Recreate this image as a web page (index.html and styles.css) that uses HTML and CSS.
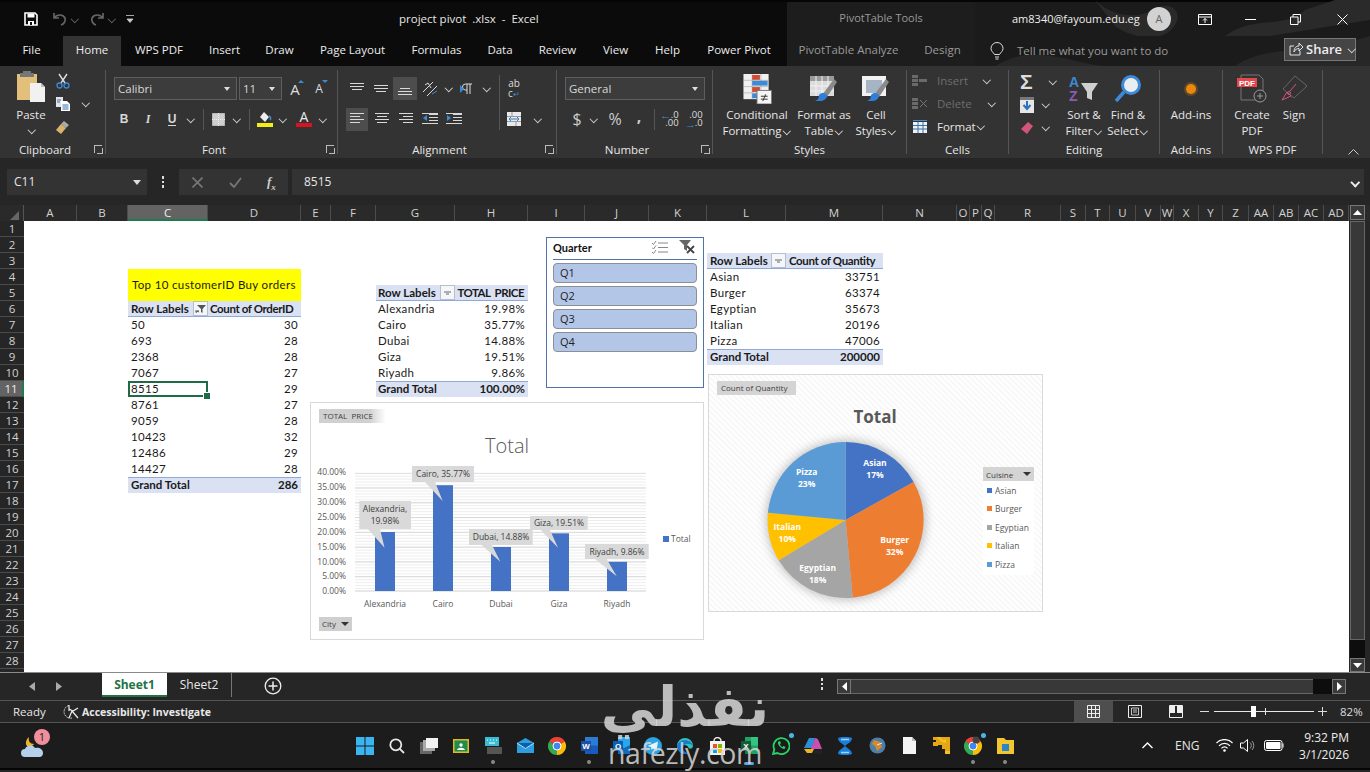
FILE: index.html
```html
<!DOCTYPE html>
<html lang="en">
<head>
<meta charset="utf-8">
<title>project pivot .xlsx - Excel</title>
<link rel="stylesheet" href="styles.css">
</head>
<body>
<svg class="defs" width="0" height="0" aria-hidden="true">
  <symbol id="a-top" viewBox="0 0 16 14"><path d="M1 1.5h14M1 4.5h14M3 7.5h10" stroke="#d8d8d8" fill="none"/></symbol>
  <symbol id="a-mid" viewBox="0 0 16 14"><path d="M1 3.5h14M1 6.5h14M3 9.5h10" stroke="#d8d8d8" fill="none"/></symbol>
  <symbol id="a-bot" viewBox="0 0 16 14"><path d="M3 6.5h10M1 9.5h14M1 12.5h14" stroke="#d8d8d8" fill="none"/></symbol>
  <symbol id="a-l" viewBox="0 0 16 14"><path d="M1 1.5h14M1 4.5h10M1 7.5h14M1 10.5h10" stroke="#d8d8d8" fill="none"/></symbol>
  <symbol id="a-c" viewBox="0 0 16 14"><path d="M1 1.5h14M3 4.5h10M1 7.5h14M3 10.5h10" stroke="#d8d8d8" fill="none"/></symbol>
  <symbol id="a-r" viewBox="0 0 16 14"><path d="M1 1.5h14M5 4.5h10M1 7.5h14M5 10.5h10" stroke="#d8d8d8" fill="none"/></symbol>
  <symbol id="brush" viewBox="0 0 30 30"><path d="M13 21L25 5l3 3-10 15z" fill="#8a8a8a"/><path d="M10 21c3-3 6-2 8 0 0 4-3 6-8 6H6c3-1 4-3 4-6z" fill="#2f7ed8"/></symbol>
</svg>

<header class="title">
  <div class="qat">
    <svg class="q-save" width="14" height="14" viewBox="0 0 14 14"><path d="M1 1h10l2 2v10H1z" fill="none" stroke="#fff" stroke-width="1.6"/><path d="M3.500 1.500h7v4h-7zM4 9h6v4H4z" fill="#fff"/><path d="M6 10h2v3H6z" fill="#111"/></svg>
    <svg class="q-undo" width="16" height="14" viewBox="0 0 16 14"><path d="M2 6c3-4 9-4 11 0 1 3-1 6-4 7M2 1v5h5" fill="none" stroke="#666" stroke-width="1.7"/></svg>
    <i class="c dim"></i>
    <svg class="q-redo" width="16" height="14" viewBox="0 0 16 14"><path d="M14 6c-3-4-9-4-11 0-1 3 1 6 4 7M14 1v5H9" fill="none" stroke="#666" stroke-width="1.7"/></svg>
    <i class="c dim"></i>
    <svg class="q-more" width="8" height="10" viewBox="0 0 8 10"><path d="M0 1.500h8M1 5h6L4 8.500z" fill="#ccc" stroke="#ccc" stroke-width=".8"/></svg>
  </div>
  <div class="doc">project pivot&nbsp; .xlsx&nbsp; -&nbsp; Excel</div>
  <div class="ctx">PivotTable Tools</div>
  <div class="acct">
    <svg class="swirl" width="395" height="36" viewBox="0 0 395 36"><path d="M120 0c14 14 40 22 62 8 14-8 30 6 14 22-12 12-40 8-56-4zM250 36c30-22 60-6 80-26l30-10h35v20c-40 6-60 10-100 16z" fill="#2a2a2a"/></svg>
    <span class="mail">am8340@fayoum.edu.eg</span>
    <span class="avatar">A</span>
    <svg class="w-disp" width="14" height="11" viewBox="0 0 14 11"><path d="M.5.500h13v10H.5zM.5 3h13M7 9V4.500M5 6.500l2-2 2 2" fill="none" stroke="#fff"/></svg>
    <svg class="w-min" width="11" height="11" viewBox="0 0 11 11"><path d="M0 5.500h11" stroke="#fff"/></svg>
    <svg class="w-max" width="11" height="11" viewBox="0 0 11 11"><path d="M.5 3h7.500v7.500H.5zM3 3V.5h7.500V8H8" fill="none" stroke="#fff"/></svg>
    <svg class="w-close" width="11" height="11" viewBox="0 0 11 11"><path d="M.5.500l10 10M10.500.5l-10 10" stroke="#fff"/></svg>
  </div>
</header>

<nav class="tabs">
  <span class="tab">File</span>
  <span class="tab on">Home</span>
  <span class="tab">WPS PDF</span>
  <span class="tab">Insert</span>
  <span class="tab">Draw</span>
  <span class="tab">Page Layout</span>
  <span class="tab">Formulas</span>
  <span class="tab">Data</span>
  <span class="tab">Review</span>
  <span class="tab">View</span>
  <span class="tab">Help</span>
  <span class="tab">Power Pivot</span>
  <div class="ctx-tabs"><span class="tab mute an">PivotTable Analyze</span><span class="tab mute de">Design</span></div>
  <div class="tell">
    <svg class="swirl2" width="395" height="30" viewBox="0 0 395 30"><path d="M20 30C60 6 90 26 130 30zM260 30c30-22 70-10 135-30v30z" fill="#272727"/></svg>
    <svg class="bulb" width="14" height="18" viewBox="0 0 14 18"><path d="M4.500 12.500C3 10 1 9 1 6.500a6 6 0 0 1 12 0c0 2.500-2 3.500-3.500 6zM5 15h4M5.500 17h3" fill="none" stroke="#ddd"/></svg>
    <span class="tell-t">Tell me what you want to do</span>
    <span class="share">
      <svg width="14" height="14" viewBox="0 0 14 14"><path d="M5 4H1v9h10V9M5 10c0-4 2-6 5-6V1l4 4-4 4V6.500c-2 0-4 1-5 3.500z" fill="none" stroke="#e5e5e5"/></svg>
      <b>Share</b><i class="c"></i>
    </span>
  </div>
</nav>

<section class="ribbon">
  <div class="grp g-clip">
    <div class="body clipb">
      <div class="big paste">
        <svg width="30" height="34" viewBox="0 0 30 34"><path d="M1 4h20v26H1z" fill="#e3bf7c"/><path d="M7 1h8v2h3v4H4V3h3z" fill="#777"/><path d="M14 13h11l4 4v15H14z" fill="#f1f1f1"/><path d="M25 13v4h4" fill="#bbb"/></svg>
        <span>Paste</span><i class="c solo"></i>
      </div>
      <div class="stack3">
        <svg width="16" height="16" viewBox="0 0 16 16"><path d="M4 1l6 9M12 1L6 10" stroke="#ddd" stroke-width="1.400"/><circle cx="4.500" cy="12.500" r="2.500" fill="none" stroke="#3e8ad6" stroke-width="1.300"/><circle cx="11.500" cy="12.500" r="2.500" fill="none" stroke="#3e8ad6" stroke-width="1.300"/></svg>
        <svg width="16" height="16" viewBox="0 0 16 16"><path d="M1 1h7v10H1z" fill="#e5e5e5"/><path d="M6 5h6l3 3v7H6z" fill="#fff"/><path d="M7.500 9h6M7.500 11h6M7.500 13h6M2 4h4M2 6h3" stroke="#3670b5"/></svg>
        <svg width="16" height="16" viewBox="0 0 16 16"><path d="M9 2l5 4-3 3-5-4z" fill="#aaa"/><path d="M6 5l5 4-5 6-5-4z" fill="#d9b26c"/></svg>
      </div>
      <i class="c clip-c"></i>
    </div>
    <footer class="lab has-dl">Clipboard<i class="dl"></i></footer>
  </div>

  <div class="grp g-font">
    <div class="body rows">
      <div class="row">
        <span class="combo c-font">Calibri<i class="tri"></i></span>
        <span class="combo c-size">11<i class="tri"></i></span>
        <span class="b grow">A<em class="up"></em></span>
        <span class="b shrink">A<em class="dn"></em></span>
      </div>
      <div class="row r2">
        <span class="b fmt"><b>B</b></span>
        <span class="b fmt"><b class="it">I</b></span>
        <span class="b fmt"><b class="un">U</b></span>
        <i class="c w12"></i>
        <i class="vs ml7"></i>
        <span class="b ml2"><svg width="13" height="13" viewBox="0 0 13 13"><path d="M.5.500h12v12H.5z" fill="#cfcfcf" stroke="#eee" stroke-dasharray="1 1"/><path d="M0 6.500h13M6.500 0v13" stroke="#eee" stroke-dasharray="1 1"/></svg></span>
        <i class="c w12"></i>
        <i class="vs ml7"></i>
        <span class="b bfill"><svg width="16" height="16" viewBox="0 0 16 16"><path d="M7 1l5 5-4 5-5-5z" fill="#eee"/><path d="M12 5c2 1 2 3 1 4" fill="none" stroke="#3e8ad6" stroke-width="1.500"/><path d="M0 12h16v4H0z" fill="#f5ee12"/></svg></span>
        <i class="c w12"></i>
        <span class="b bcol"><svg width="16" height="16" viewBox="0 0 16 16"><path d="M0 12h16v4H0z" fill="#d9121f"/></svg><span class="acol">A</span></span>
        <i class="c w12"></i>
      </div>
    </div>
    <footer class="lab has-dl">Font<i class="dl"></i></footer>
  </div>

  <div class="grp g-align">
    <div class="body alignb">
      <div class="rows a-left">
        <div class="row">
          <span class="b"><svg width="16" height="14"><use href="#a-top"/></svg></span>
          <span class="b"><svg width="16" height="14"><use href="#a-mid"/></svg></span>
          <span class="b hl"><svg width="16" height="14"><use href="#a-bot"/></svg></span>
          <span class="b ori"><svg width="17" height="16" viewBox="0 0 17 16"><path d="M1 11L11 1M5 15L15 5" stroke="#ddd" fill="none"/><path d="M3 4l3-2 3 5" stroke="#ddd" fill="none"/><path d="M10 13l5-3" stroke="#3e8ad6"/></svg></span>
          <i class="c w12"></i>
          <span class="b rtl"><svg width="16" height="12" viewBox="0 0 16 12"><path d="M7 1v10M10 1v10M7 1H5.500a3 3 0 0 0 0 6H7M7 1h5" stroke="#ddd" fill="none"/><path d="M0 2l4 4-4 4z" fill="#3e8ad6"/></svg></span>
          <i class="c w12"></i>
        </div>
        <div class="row r2 sm">
          <span class="b hl"><svg width="16" height="14"><use href="#a-l"/></svg></span>
          <span class="b"><svg width="16" height="14"><use href="#a-c"/></svg></span>
          <span class="b"><svg width="16" height="14"><use href="#a-r"/></svg></span>
          <span class="b"><svg width="16" height="14" viewBox="0 0 16 14"><path d="M7 2.500h9M7 5.500h9M7 8.500h9M0 11.500h16M0 1.500h16" stroke="#d8d8d8" fill="none"/><path d="M5 3L1 6l4 3z" fill="#3e8ad6"/></svg></span>
          <span class="b"><svg width="16" height="14" viewBox="0 0 16 14"><path d="M7 2.500h9M7 5.500h9M7 8.500h9M0 11.500h16M0 1.500h16" stroke="#d8d8d8" fill="none"/><path d="M1 3l4 3-4 3z" fill="#3e8ad6"/></svg></span>
        </div>
      </div>
      <i class="vs tall"></i>
      <div class="rows a-right">
        <div class="row">
          <span class="b wrapt"><b>ab</b><b>c<em>↵</em></b></span>
        </div>
        <div class="row r2">
          <span class="b"><svg width="16" height="16" viewBox="0 0 16 16"><path d="M1 1h14v14H1z" fill="#e9e9e9"/><path d="M1 5.500h14M1 10.500h14M6 1v4M10 11v4" stroke="#999"/><path d="M3 8h10M3 8l2-2M3 8l2 2M13 8l-2-2M13 8l-2 2" stroke="#2f7ed8" fill="none"/></svg></span>
          <i class="c w12 ml5"></i>
        </div>
      </div>
    </div>
    <footer class="lab has-dl">Alignment<i class="dl"></i></footer>
  </div>

  <div class="grp g-num">
    <div class="body rows">
      <div class="row"><span class="combo c-num">General<i class="tri"></i></span></div>
      <div class="row r2">
        <span class="b tx-l">$</span>
        <i class="c w12 nm2"></i>
        <span class="b tx-l ml4">%</span>
        <span class="b tx-l comma">,</span>
        <i class="vs ml3"></i>
        <span class="b ml3 dec"><em class="ar">←</em><span>.0<br>.00</span></span>
        <span class="b dec"><em class="ar a2">→</em><span>.00<br>.0</span></span>
      </div>
    </div>
    <footer class="lab has-dl">Number<i class="dl"></i></footer>
  </div>

  <div class="grp g-sty">
    <div class="body bigs">
      <div class="big w72">
        <svg width="30" height="31" viewBox="0 0 30 31"><path d="M1 0h26v26H1z" fill="#f1f1f1"/><path d="M1 6.500h26M1 13h26M1 19.500h26M10 0v26M19 0v26" stroke="#aaa" stroke-width=".7"/><path d="M10 1h8v5h-8z" fill="#cf4b32"/><path d="M10 7h16v5H10z" fill="#3e8ad6"/><path d="M10 13.500h8v5h-8z" fill="#cf4b32"/><path d="M10 20h6v5h-6z" fill="#3e8ad6"/><path d="M15 17h15v14H15z" fill="#f4f4f4" stroke="#777"/><path d="M19 23h7M19 26h7M24 21l-3 7" stroke="#333"/></svg>
        <span>Conditional</span><span>Formatting<i class="c inl"></i></span>
      </div>
      <div class="big w62">
        <svg width="30" height="30" viewBox="0 0 30 30"><path d="M1 2h24v20H1z" fill="#dcdcdc"/><path d="M1 2h24v5H1z" fill="#9a9a9a"/><path d="M1 12h24M1 17h24M7 2v20M13 2v20M19 2v20" stroke="#f2f2f2"/><use href="#brush" width="30" height="30"/></svg>
        <span>Format as</span><span>Table<i class="c inl"></i></span>
      </div>
      <div class="big w42">
        <svg width="30" height="30" viewBox="0 0 30 30"><path d="M1 2h24v20H1z" fill="#f2f2f2"/><path d="M5 6h16v13H5z" fill="#a7b4c6"/><use href="#brush" width="30" height="30"/></svg>
        <span>Cell</span><span>Styles<i class="c inl"></i></span>
      </div>
    </div>
    <footer class="lab">Styles</footer>
  </div>

  <div class="grp g-cells">
    <div class="body cellrows">
      <div class="crow dis"><svg width="18" height="14" viewBox="0 0 18 14"><path d="M1 1h6v3H1zM1 5h6v3H1zM1 9h6v3H1zM8 5h8v3H8z" fill="#6a6a6a"/></svg><span>Insert</span><i class="c c-a"></i></div>
      <div class="crow dis"><svg width="18" height="14" viewBox="0 0 18 14"><path d="M1 1h6v3H1zM1 5h6v3H1zM1 9h6v3H1z" fill="#6a6a6a"/><path d="M9 3l7 7M16 3l-7 7" stroke="#777"/></svg><span>Delete</span><i class="c c-b"></i></div>
      <div class="crow"><svg width="18" height="14" viewBox="0 0 18 14"><path d="M2 2h14v11H2z" fill="#f1f1f1"/><path d="M2 5.500h14M2 9h14M7 2v11M12 2v11" stroke="#3670b5"/><path d="M2 .5h14" stroke="#3e8ad6"/></svg><span>Format</span><i class="c c-c"></i></div>
    </div>
    <footer class="lab">Cells</footer>
  </div>

  <div class="grp g-edit">
    <div class="body editb">
      <div class="cellrows edit-l">
        <div class="crow"><span class="sigma">Σ</span><i class="c c-s"></i></div>
        <div class="crow"><svg width="14" height="16" viewBox="0 0 14 16"><path d="M0 0h14v16H0z" fill="#e6e6e6"/><path d="M0 0h14v3H0z" fill="#777"/><path d="M7 4v7M3.500 8L7 12l3.500-4" stroke="#2f6fc0" stroke-width="2" fill="none"/></svg><i class="c c-e"></i></div>
        <div class="crow"><svg width="14" height="14" viewBox="0 0 14 14"><path d="M8 1l5 4-6 8-6-5z" fill="#d2567a"/></svg><i class="c c-e"></i></div>
      </div>
      <div class="big w44">
        <svg width="30" height="28" viewBox="0 0 30 28"><text x="0" y="12" class="sortA">A</text><text x="0" y="26" class="sortZ">Z</text><path d="M12 8h17l-6 9v8l-5-2v-6z" fill="#cfcfcf"/></svg>
        <span>Sort &amp;</span><span>Filter<i class="c inl"></i></span>
      </div>
      <div class="big w44">
        <svg width="30" height="30" viewBox="0 0 30 30"><circle cx="18" cy="11" r="8.500" fill="#e9eef3" stroke="#3e8ad6" stroke-width="3"/><path d="M11 18l-8 9" stroke="#3e8ad6" stroke-width="3.500"/></svg>
        <span>Find &amp;</span><span>Select<i class="c inl"></i></span>
      </div>
    </div>
    <footer class="lab">Editing</footer>
  </div>

  <div class="grp g-add">
    <div class="body bigs">
      <div class="big w62">
        <svg width="30" height="30" viewBox="0 0 30 30"><circle cx="15" cy="15" r="5" fill="#e8890c"/><circle cx="15" cy="15" r="7" fill="#e8890c" opacity=".25"/></svg>
        <span>Add-ins</span>
      </div>
    </div>
    <footer class="lab">Add-ins</footer>
  </div>

  <div class="grp g-wps">
    <div class="body bigs">
      <div class="big w50">
        <svg width="30" height="30" viewBox="0 0 30 30"><path d="M4 1h18l4 4v21H4z" fill="none" stroke="#777"/><circle cx="23" cy="22" r="6" fill="#333" stroke="#999"/><path d="M20 22h6M23 19v6" stroke="#999"/><path d="M0 4h20v9H0z" fill="#e4484d"/><text x="10" y="11.500" class="pdf">PDF</text></svg>
        <span>Create</span><span>PDF</span>
      </div>
      <div class="big w34">
        <svg width="30" height="30" viewBox="0 0 30 30"><path d="M4 15L16 2l12 10-13 12z" fill="none" stroke="#666"/><path d="M3 26l5-8 4 4z" fill="none" stroke="#d2567a"/><circle cx="10" cy="19" r="1.500" fill="none" stroke="#d2567a"/><path d="M11 17l6-7" stroke="#d2567a"/></svg>
        <span>Sign</span>
      </div>
    </div>
    <footer class="lab">WPS PDF</footer>
  </div>
  <svg class="collapse" width="11" height="6" viewBox="0 0 11 6"><path d="M.5 5.500l5-5 5 5" fill="none" stroke="#ccc"/></svg>
</section>

<section class="fbar">
  <div class="namebox">C11<i class="tri"></i></div>
  <div class="vdots"><i></i><i></i><i></i></div>
  <div class="fbtns">
    <svg width="11" height="11" viewBox="0 0 11 11"><path d="M.5.500l10 10M10.500.5l-10 10" stroke="#777" stroke-width="1.600"/></svg>
    <svg width="13" height="11" viewBox="0 0 13 11"><path d="M1 6l4 4 7-9" fill="none" stroke="#777" stroke-width="1.800"/></svg>
    <span class="fx">f<sub>x</sub></span>
  </div>
  <div class="formula"><span>8515</span><i class="c strong"></i></div>
</section>

<div class="colhead">
  <div class="corner"><svg width="9" height="9" viewBox="0 0 9 9"><path d="M9 0v9H0z" fill="#666"/></svg></div>
  <div class="cols">
    <span>A</span><span>B</span><span class="sel">C</span><span>D</span><span>E</span><span>F</span><span>G</span><span>H</span><span>I</span><span>J</span><span>K</span><span>L</span><span>M</span><span>N</span><span>O</span><span>P</span><span>Q</span><span>R</span><span>S</span><span>T</span><span>U</span><span>V</span><span>W</span><span>X</span><span>Y</span><span>Z</span><span>AA</span><span>AB</span><span>AC</span><span>AD</span>
  </div>
  <div class="sbtn up-b"><svg width="9" height="5" viewBox="0 0 9 5"><path d="M4.500 0L9 5H0z" fill="#fff"/></svg></div>
</div>

<main class="main">
  <div class="rowhead">
    <span>1</span><span>2</span><span>3</span><span>4</span><span>5</span><span>6</span><span>7</span><span>8</span><span>9</span><span>10</span><span class="sel">11</span><span>12</span><span>13</span><span>14</span><span>15</span><span>16</span><span>17</span><span>18</span><span>19</span><span>20</span><span>21</span><span>22</span><span>23</span><span>24</span><span>25</span><span>26</span><span>27</span><span>28</span>
  </div>

  <div class="sheet">
    <div class="banner">Top 10 customerID Buy orders</div>

    <div class="pivot p1">
      <div class="ph"><span>Row Labels</span><i class="fbtn"><svg width="11" height="10" viewBox="0 0 11 10"><path d="M2 1h9L7.500 5v4L6 8V5z" fill="#555"/><path d="M0 7h4M1 9l1-2 2 1" stroke="#555" fill="none"/></svg></i></div>
      <div class="ph tight">Count of OrderID</div>
      <div>50</div><div class="n">30</div>
      <div>693</div><div class="n">28</div>
      <div>2368</div><div class="n">28</div>
      <div>7067</div><div class="n">27</div>
      <div class="active">8515</div><div class="n">29</div>
      <div>8761</div><div class="n">27</div>
      <div>9059</div><div class="n">28</div>
      <div>10423</div><div class="n">32</div>
      <div>12486</div><div class="n">29</div>
      <div>14427</div><div class="n">28</div>
      <div class="pt">Grand Total</div><div class="pt n">286</div>
    </div>

    <div class="pivot p2">
      <div class="ph"><span>Row Labels</span><i class="fbtn"><svg width="7" height="4" viewBox="0 0 7 4"><path d="M0 1h7M2 3h3" stroke="#666"/></svg></i></div>
      <div class="ph n tight2">TOTAL&nbsp; PRICE</div>
      <div>Alexandria</div><div class="n">19.98%</div>
      <div>Cairo</div><div class="n">35.77%</div>
      <div>Dubai</div><div class="n">14.88%</div>
      <div>Giza</div><div class="n">19.51%</div>
      <div>Riyadh</div><div class="n">9.86%</div>
      <div class="pt">Grand Total</div><div class="pt n">100.00%</div>
    </div>

    <div class="pivot p3">
      <div class="ph"><span>Row Labels</span><i class="fbtn"><svg width="7" height="4" viewBox="0 0 7 4"><path d="M0 1h7M2 3h3" stroke="#666"/></svg></i></div>
      <div class="ph tight">Count of Quantity</div>
      <div>Asian</div><div class="n">33751</div>
      <div>Burger</div><div class="n">63374</div>
      <div>Egyptian</div><div class="n">35673</div>
      <div>Italian</div><div class="n">20196</div>
      <div>Pizza</div><div class="n">47006</div>
      <div class="pt">Grand Total</div><div class="pt n">200000</div>
    </div>

    <aside class="slicer">
      <div class="sl-head">
        <span>Quarter</span>
        <svg class="sl-i1" width="16" height="14" viewBox="0 0 16 14"><path d="M6 2h10M6 6.500h10M6 11h10" stroke="#888"/><path d="M0 2l1.500 1.500L4 0M0 6.500L1.500 8 4 4.500M0 11l1.500 1.500L4 9" fill="none" stroke="#888"/></svg>
        <svg class="sl-i2" width="16" height="15" viewBox="0 0 16 15"><path d="M0 0h12L8 5v6L5 9V5z" fill="#666"/><path d="M8 6l7 7M15 6l-7 7" stroke="#444" stroke-width="1.800"/></svg>
      </div>
      <div class="sl-i">Q1</div>
      <div class="sl-i">Q2</div>
      <div class="sl-i">Q3</div>
      <div class="sl-i">Q4</div>
    </aside>

    <figure class="chart bar">
      <svg width="394" height="238" viewBox="310 402 394 238">
        <defs>
          <pattern id="minor" x="0" y="472.700" width="10" height="2.958" patternUnits="userSpaceOnUse"><path d="M0 .5h10" stroke="#ededed"/></pattern>
          <pattern id="major" x="0" y="472.700" width="10" height="14.788" patternUnits="userSpaceOnUse"><path d="M0 .5h10" stroke="#d9d9d9"/></pattern>
          <linearGradient id="tagg"><stop offset=".75" stop-color="#d0d0d0"/><stop offset="1" stop-color="#fff"/></linearGradient>
        </defs>
        <rect x="319" y="409" width="67" height="14" fill="url(#tagg)"/>
        <text x="323" y="419" class="t-s">TOTAL&#160; PRICE</text>
        <text x="507" y="453" class="t-title">Total</text>
        <rect x="355" y="472.700" width="291" height="118.300" fill="url(#minor)"/>
        <rect x="355" y="472.700" width="291" height="118.300" fill="url(#major)"/>
        <path d="M355 591h291" stroke="#d0d0d0"/>
        <g class="ya">
          <text x="346" y="475">40.00%</text><text x="346" y="490">35.00%</text><text x="346" y="505">30.00%</text><text x="346" y="520">25.00%</text><text x="346" y="535">20.00%</text><text x="346" y="549.500">15.00%</text><text x="346" y="564.500">10.00%</text><text x="346" y="579">5.00%</text><text x="346" y="594">0.00%</text>
        </g>
        <g fill="#4472c4">
          <rect x="375" y="532" width="20" height="59"/><rect x="433" y="485.200" width="20" height="105.800"/><rect x="491" y="547" width="20" height="44"/><rect x="549" y="533.300" width="20" height="57.700"/><rect x="607" y="561.800" width="20" height="29.200"/>
        </g>
        <g class="xa">
          <text x="385" y="607">Alexandria</text><text x="443" y="607">Cairo</text><text x="501" y="607">Dubai</text><text x="559" y="607">Giza</text><text x="617" y="607">Riyadh</text>
        </g>
        <g fill="#d9d9d9">
          <path d="M359.300 501H411v28h-31l4.500 18.700-16.500-18.700h-8.700z"/>
          <path d="M412 466h62v16h-39l7.700 19-17.700-19h-13z"/>
          <path d="M469 529h63.700v16h-40.700l8.300 16.700-18.600-16.700H469z"/>
          <path d="M530 516h57.700v14H550l8 17.700-17.300-17.700H530z"/>
          <path d="M585 544h63.700v15h-42l10 17.300-21.700-17.300H585z"/>
        </g>
        <g class="cl">
          <text x="385" y="511.500">Alexandria,</text><text x="385" y="523.500">19.98%</text>
          <text x="443" y="477">Cairo, 35.77%</text>
          <text x="501" y="539.500">Dubai, 14.88%</text>
          <text x="559" y="526">Giza, 19.51%</text>
          <text x="617" y="554.500">Riyadh, 9.86%</text>
        </g>
        <rect x="663" y="536" width="6" height="6" fill="#4472c4"/>
        <text x="671" y="542" class="lg">Total</text>
        <rect x="319" y="617" width="33" height="14" fill="#cfcfcf"/>
        <text x="322" y="627" class="t-s">City</text>
        <path d="M341 622h8l-4 4z" fill="#333"/>
      </svg>
    </figure>

    <figure class="chart pie">
      <svg width="334" height="237" viewBox="708 374 334 237">
        <defs>
          <pattern id="hatch" width="4" height="4" patternUnits="userSpaceOnUse" patternTransform="rotate(45)"><path d="M0 1h4" stroke="#f0f0f0"/></pattern>
          <filter id="soft" x="-20%" y="-20%" width="140%" height="140%"><feGaussianBlur stdDeviation="5"/></filter>
        </defs>
        <rect x="708" y="374" width="334" height="237" fill="url(#hatch)"/>
        <rect x="717" y="381" width="79" height="14" fill="#d4d4d4"/>
        <text x="721" y="391" class="t-s">Count of Quantity</text>
        <text x="875" y="423" class="t-pie">Total</text>
        <circle cx="846" cy="520" r="80" fill="#a8a8a8" opacity=".7" filter="url(#soft)"/>
        <g transform="translate(845.600 520)">
          <path d="M0 0V-78A78 78 0 0 1 68.050-38.110z" fill="#4472c4"/>
          <path d="M0 0L68.050-38.110A78 78 0 0 1 7.030 77.680z" fill="#ed7d31"/>
          <path d="M0 0L7.030 77.680A78 78 0 0 1-66.890 40.130z" fill="#a5a5a5"/>
          <path d="M0 0L-66.890 40.130A78 78 0 0 1-77.660-7.330z" fill="#ffc000"/>
          <path d="M0 0L-77.660-7.330A78 78 0 0 1 0-78z" fill="#5b9bd5"/>
        </g>
        <g class="pl">
          <text x="875" y="466">Asian</text><text x="875" y="478">17%</text>
          <text x="894.700" y="543">Burger</text><text x="894.700" y="555">32%</text>
          <text x="817.700" y="571">Egyptian</text><text x="817.700" y="583">18%</text>
          <text x="787.300" y="530">Italian</text><text x="787.300" y="542">10%</text>
          <text x="806.700" y="475">Pizza</text><text x="806.700" y="487">23%</text>
        </g>
        <rect x="983" y="467" width="51" height="108" fill="#fff"/>
        <rect x="983" y="467" width="51" height="14" fill="#d4d4d4"/>
        <text x="986" y="477.500" class="t-s">Cuisine</text>
        <path d="M1023 472h8l-4 4z" fill="#333"/>
        <g><rect x="987" y="488" width="5" height="5" fill="#4472c4"/><rect x="987" y="506" width="5" height="5" fill="#ed7d31"/><rect x="987" y="525" width="5" height="5" fill="#a5a5a5"/><rect x="987" y="543" width="5" height="5" fill="#ffc000"/><rect x="987" y="562" width="5" height="5" fill="#5b9bd5"/></g>
        <g class="lgp"><text x="995" y="494">Asian</text><text x="995" y="512">Burger</text><text x="995" y="531">Egyptian</text><text x="995" y="549">Italian</text><text x="995" y="568">Pizza</text></g>
      </svg>
    </figure>
  </div>

  <div class="vscroll">
    <div class="vthumb"></div>
    <div class="vblack"></div>
    <div class="sbtn dn-b"><svg width="9" height="5" viewBox="0 0 9 5"><path d="M4.500 5L9 0H0z" fill="#fff"/></svg></div>
  </div>
</main>

<div class="sheetbar">
  <svg class="nav n1" width="6" height="9" viewBox="0 0 6 9"><path d="M6 0v9L0 4.500z" fill="#aaa"/></svg>
  <svg class="nav n2" width="6" height="9" viewBox="0 0 6 9"><path d="M0 0v9l6-4.500z" fill="#aaa"/></svg>
  <span class="stab on">Sheet1</span>
  <span class="stab">Sheet2</span>
  <svg class="plus" width="18" height="18" viewBox="0 0 18 18"><circle cx="9" cy="9" r="7.800" fill="none" stroke="#eee" stroke-width="1.300"/><path d="M9 4.500v9M4.500 9h9" stroke="#eee" stroke-width="1.500"/></svg>
  <div class="vdots sb"><i></i><i></i><i></i></div>
  <div class="hscroll">
    <span class="sbtn h"><svg width="5" height="9" viewBox="0 0 5 9"><path d="M5 0v9L0 4.500z" fill="#fff"/></svg></span>
    <span class="htrack"></span>
    <span class="hblack"></span>
    <span class="sbtn h"><svg width="5" height="9" viewBox="0 0 5 9"><path d="M0 0v9l5-4.500z" fill="#fff"/></svg></span>
  </div>
</div>

<div class="status">
  <span class="ready">Ready</span>
  <svg class="acc" width="17" height="15" viewBox="0 0 17 15"><path d="M6 1.500A6 6 0 1 0 9 14" fill="none" stroke="#ddd" stroke-dasharray="2 1"/><path d="M6 1v6M6 5l4 2 5-3M9 7l-3 7M9 7l6 7" fill="none" stroke="#eee" stroke-width="1.200"/></svg>
  <b class="acc-t">Accessibility: Investigate</b>
  <div class="views">
    <span class="view on"><svg width="13" height="13" viewBox="0 0 13 13"><path d="M.5.500h12v12H.5zM.5 4.500h12M.5 8.500h12M4.500.5v12M8.500.5v12" fill="none" stroke="#eee"/></svg></span>
    <span class="view"><svg width="14" height="13" viewBox="0 0 14 13"><path d="M.5.500h13v12H.5z" fill="none" stroke="#eee"/><path d="M3.500 3h7v7h-7zM5 5h4M5 7h4" fill="none" stroke="#eee" stroke-width=".8"/></svg></span>
    <span class="view"><svg width="14" height="13" viewBox="0 0 14 13"><path d="M.5.500h13v12H.5z" fill="none" stroke="#eee"/><path d="M1 1h5v7H1zM8 1h5v7H8z" fill="#eee"/></svg></span>
  </div>
  <div class="zoomer">
    <span class="pm minus"></span>
    <span class="slider"><i class="tick"></i><i class="knob"></i></span>
    <span class="pm plusz"></span>
    <span class="pct">82%</span>
  </div>
</div>

<footer class="taskbar">
  <div class="tb-left">
    <svg width="26" height="26" viewBox="0 0 26 26"><path d="M8 4c-1 4 1 7 5 7-1 2-4 3-7 2-2-2-1-7 2-9z" fill="#f0b429"/><path d="M4 24a4 4 0 0 1 0-8c1-4 8-5 10-1 4-1 8 1 8 5a4 4 0 0 1-3 4z" fill="#b5cfee"/></svg>
    <span class="badge">1</span>
  </div>
  <div class="tb-mid">
    <span class="ti"><svg width="18" height="18" viewBox="0 0 18 18"><path d="M0 0h8.500v8.500H0zM9.500 0H18v8.500H9.500zM0 9.500h8.500V18H0zM9.500 9.500H18V18H9.500z" fill="#3bb4f2"/></svg></span>
    <span class="ti"><svg width="16" height="16" viewBox="0 0 16 16"><circle cx="6.800" cy="6.800" r="5.500" fill="none" stroke="#e8e8e8" stroke-width="1.800"/><path d="M10.800 10.800L15 15" stroke="#e8e8e8" stroke-width="1.800"/></svg></span>
    <span class="ti"><svg width="18" height="16" viewBox="0 0 18 16"><path d="M0 4h12v12H0z" fill="#666"/><path d="M3 2h12v11H3z" fill="#aaa"/><path d="M6 0h12v10H6z" fill="#f2f2f2"/></svg></span>
    <span class="ti"><svg width="16" height="14" viewBox="0 0 16 14"><path d="M0 0h16v14H0z" fill="#e4b81f"/><path d="M1.500 1.500h13v11h-13z" fill="#1e8e4e"/><circle cx="8" cy="6" r="1.700" fill="#fff"/><path d="M4 11c1-3 7-3 8 0z" fill="#fff"/></svg></span>
    <span class="ti on-dot"><svg width="17" height="17" viewBox="0 0 17 17"><path d="M0 0h14v9H0z" fill="#38bcd4"/><path d="M2 10h15v7H2z" fill="#555"/><path d="M2 3h1M5 3h1M8 3h1M11 3h1M4 6h6" stroke="#fff"/></svg></span>
    <span class="ti"><svg width="17" height="15" viewBox="0 0 17 15"><path d="M0 5L8.500 0 17 5v10H0z" fill="#2d9fe0"/><path d="M0 5l8.500 6L17 5" fill="#0a5fa8"/><path d="M0 5l8.500 5.500L17 5" fill="none" stroke="#bfe4fa"/></svg></span>
    <span class="ti"><svg width="18" height="18" viewBox="0 0 18 18"><path d="M9 9L1.200 4.500A9 9 0 0 1 16.800 4.500z" fill="#ea4335"/><path d="M9 9L16.800 4.500A9 9 0 0 1 9 18z" fill="#fbbc05"/><path d="M9 9V18A9 9 0 0 1 1.200 4.500z" fill="#34a853"/><circle cx="9" cy="9" r="4" fill="#4285f4" stroke="#fff"/></svg></span>
    <span class="ti on-dot"><svg width="17" height="17" viewBox="0 0 17 17"><path d="M4 0h13v17H4z" fill="#2b7cd3"/><path d="M4 8.500h13v8.500H4z" fill="#185abd"/><path d="M0 4h10v10H0z" fill="#1e4fa5"/><text x="5" y="12" class="tk">W</text></svg></span>
    <span class="ti"><svg width="17" height="17" viewBox="0 0 17 17"><path d="M5 0h12v13H5z" fill="#28a8ea"/><path d="M5 8l6 3 6-3v9H5z" fill="#0f6cbd"/><path d="M0 4h10v10H0z" fill="#0a5fb5"/><text x="5" y="12" class="tk">O</text></svg></span>
    <span class="ti"><svg width="18" height="18" viewBox="0 0 18 18"><circle cx="9" cy="9" r="9" fill="#2aa3e0"/><path d="M3.500 9L14 4.500 12.500 14 9 11.500 7.500 13l-.5-3z" fill="#e6f4fb"/></svg></span>
    <span class="ti"><svg width="18" height="18" viewBox="0 0 18 18"><path d="M1 9a8 8 0 0 1 16 0c0 2-2 3-4 2.500-1-2-2.500-4-5.500-3.500C5 8.500 4 12 6 15c-3-.5-5-3-5-6z" fill="#2ec4b6"/><path d="M1 9c2-7 13-8 16 0-3-3-9-3-10 1-1 3 2 6 6 6-6 3-12-1-12-7z" fill="#1a77d2"/></svg></span>
    <span class="ti"><svg width="17" height="18" viewBox="0 0 17 18"><path d="M1 4h15v14H1z" fill="#f4f4f4"/><path d="M5 4a3.500 3.500 0 0 1 7 0" fill="none" stroke="#eee" stroke-width="1.400"/><path d="M4 7h4v4H4z" fill="#f25022"/><path d="M9 7h4v4H9z" fill="#7fba00"/><path d="M4 12h4v4H4z" fill="#00a4ef"/><path d="M9 12h4v4H9z" fill="#ffb900"/></svg></span>
    <span class="ti on-bar"><svg width="17" height="17" viewBox="0 0 17 17"><path d="M4 0h13v17H4z" fill="#21a366"/><path d="M10 0h7v8.500h-7z" fill="#33c481"/><path d="M4 8.500h6.500V17H4z" fill="#107c41"/><path d="M0 4h10v10H0z" fill="#185c37"/><text x="5" y="12" class="tk">X</text></svg></span>
    <span class="ti"><svg width="18" height="18" viewBox="0 0 18 18"><path d="M1 17l1.300-4.500A8 8 0 1 1 5.500 16z" fill="none" stroke="#25d366" stroke-width="1.800"/><path d="M6 5c-1 2 3 7 6.500 7l1-2-2-1-1 1c-1 0-2.500-2-2.500-3l1-1-1-2z" fill="#25d366"/></svg><i class="tdot"></i></span>
    <span class="ti"><svg width="18" height="17" viewBox="0 0 18 17"><path d="M5 1h6l-3 10H0z" fill="#2b8fd8"/><path d="M11 1c3 0 4 3 5 6l2 5H7z" fill="#c94fb0"/><path d="M0 12h10l-2 4H3z" fill="#f0b429"/><path d="M10 13h8v4h-8z" fill="#222"/></svg></span>
    <span class="ti"><svg width="16" height="18" viewBox="0 0 16 18"><path d="M1 1c3-1.500 11-1.500 14 0 0 4-4 5-7 8 3 3 7 4 7 8-3 1.500-11 1.500-14 0 0-4 4-5 7-8C5 6 1 5 1 1z" fill="#1c7fd6"/><path d="M4 2.500h8M4 15.500h8" stroke="#9fd4ff" stroke-width="1.400"/></svg></span>
    <span class="ti"><svg width="17" height="17" viewBox="0 0 17 17"><circle cx="8.500" cy="8.500" r="8" fill="#4f7fa8"/><path d="M5 3l6 2 2 5-5 4-2-5-3-2z" fill="#d78a2d"/><path d="M8 8l5-2" stroke="#eee"/></svg></span>
    <span class="ti"><svg width="13" height="17" viewBox="0 0 13 17"><path d="M0 0h9l4 4v13H0z" fill="#f4f4f4"/><path d="M9 0l4 4H9z" fill="#bbb"/></svg></span>
    <span class="ti"><svg width="17" height="17" viewBox="0 0 17 17"><path d="M0 0h17v17h-5v-5H9V8H5v1H0V5h3V3H0z" fill="#e5a812"/><path d="M12 14h5v3h-5zM3 0h4l3 3 3-1v4l-4-1z" fill="#f3c02a"/></svg></span>
    <span class="ti on-dot"><svg width="18" height="19" viewBox="0 0 18 19"><path d="M9 10L1.200 5.500A9 9 0 0 1 16.800 5.500z" fill="#ea4335"/><path d="M9 10L16.800 5.500A9 9 0 0 1 9 19z" fill="#fbbc05"/><path d="M9 10V19A9 9 0 0 1 1.200 5.500z" fill="#34a853"/><circle cx="9" cy="10" r="4" fill="#4285f4" stroke="#fff"/><circle cx="12" cy="4" r="3.500" fill="#444"/></svg><i class="tdot"></i></span>
    <span class="ti on-dot"><svg width="17" height="16" viewBox="0 0 17 16"><path d="M0 0h7l2 2h8v14H0z" fill="#f3c62f"/><path d="M5 6h7v7H5z" fill="#2a86c7"/></svg></span>
  </div>
  <div class="tb-right">
    <svg class="t-chev" width="11" height="7" viewBox="0 0 11 7"><path d="M.5 6l5-5 5 5" fill="none" stroke="#fff" stroke-width="1.400"/></svg>
    <span class="eng">ENG</span>
    <svg class="t-wifi" width="17" height="13" viewBox="0 0 17 13"><path d="M.5 4a11 11 0 0 1 16 0M3 6.800a7.500 7.500 0 0 1 11 0M5.500 9.300a4 4 0 0 1 6 0" fill="none" stroke="#fff" stroke-width="1.200"/><circle cx="8.500" cy="11.500" r="1.300" fill="#fff"/></svg>
    <svg class="t-vol" width="15" height="13" viewBox="0 0 15 13"><path d="M.5 4h3l4-3.500v12l-4-3.500h-3z" fill="none" stroke="#fff"/><path d="M10 3.500a4 4 0 0 1 0 6M12 2a6.500 6.500 0 0 1 0 9" fill="none" stroke="#999"/></svg>
    <svg class="t-bat" width="20" height="11" viewBox="0 0 20 11"><rect x=".5" y=".5" width="17.500" height="10" rx="2" fill="none" stroke="#fff"/><rect x="2" y="2" width="14.500" height="7" rx="1" fill="#fff"/><path d="M19 3.500v4" stroke="#fff"/></svg>
    <div class="clock"><span>9:32 PM</span><span>3/1/2026</span></div>
  </div>
</footer>

<div class="wm-ar" lang="ar" dir="rtl">نفذلي</div>
<div class="wm-en">nafezly.com</div>
</body>
</html>
```

FILE: styles.css
```css
* { box-sizing: border-box; }
html, body { margin: 0; padding: 0; }
body {
  position: relative;
  width: 1370px;
  height: 772px;
  overflow: hidden;
  display: flex;
  flex-direction: column;
  background: #262626;
  color: #e6e6e6;
  font: 11.5px/16px "Open Sans", "Noto Sans", sans-serif;
}
i, em { font-style: normal; display: inline-block; }
svg { display: block; flex: none; }
.defs { position: absolute; }

/* chevrons & small arrows */
.c { width: 12px; height: 12px; position: relative; flex: none; }
.c::after {
  content: ""; position: absolute; left: 3.500px; top: 2.500px;
  width: 4.500px; height: 4.500px;
  border-right: 1.200px solid #d8d8d8; border-bottom: 1.200px solid #d8d8d8;
  transform: rotate(45deg);
}
.c.dim::after { border-color: #666; }
.c.strong::after { border-color: #eee; border-width: 2px; }
.c.inl { display: inline-block; vertical-align: -2px; width: 10px; }
.c.inl::after { left: 2.500px; }
.tri { width: 0; height: 0; border: 3.500px solid transparent; border-top: 4px solid #ddd; border-bottom: 0; flex: none; }
.w12 { width: 12px; }

/* title */
.title { height: 36px; flex: none; display: flex; background: #0b0b0b; border-top: 2px solid #050505; font-size: 11.500px; }
.qat { width: 399px; flex: none; display: flex; align-items: center; }
.q-save { margin-left: 24px; }
.q-undo { margin-left: 14px; }
.q-redo { margin-left: 9px; }
.q-more { margin-left: 9px; }
.doc { width: 388px; flex: none; line-height: 34px; color: #e8e8e8; }
.ctx { width: 188px; flex: none; background: #1d1d1d; color: #9a9a9a; text-align: center; line-height: 32px; font-size: 11px; }
.acct { flex: 1; position: relative; background: #1b1b1b; display: flex; align-items: center; }
.swirl { position: absolute; left: 0; top: -2px; }
.swirl2 { position: absolute; left: 0; top: 0; }
.mail { position: relative; margin-left: 37px; width: 136px; color: #efefef; font-size: 11px; white-space: nowrap; }
.avatar { position: relative; width: 24px; height: 24px; margin-left: -1px; border-radius: 50%; background: #d2d2d2; color: #666; text-align: center; line-height: 24px; font-size: 11px; }
.w-disp { position: relative; margin-left: 27px; }
.w-min { position: relative; margin-left: 33px; }
.w-max { position: relative; margin-left: 34px; }
.w-close { position: relative; margin-left: 36px; }

/* tabs */
.tabs { height: 30px; flex: none; display: flex; background: #0b0b0b; font-size: 11.500px; }
.tab { line-height: 28px; color: #ececec; white-space: nowrap; text-align: center; flex: none; }
.tabs > .tab:nth-child(1) { width: 63px; }
.tabs > .tab:nth-child(2) { width: 58px; background: #333; }
.tabs > .tab:nth-child(3) { width: 76px; }
.tabs > .tab:nth-child(4) { width: 55px; }
.tabs > .tab:nth-child(5) { width: 55px; }
.tabs > .tab:nth-child(6) { width: 91px; }
.tabs > .tab:nth-child(7) { width: 77px; }
.tabs > .tab:nth-child(8) { width: 50px; }
.tabs > .tab:nth-child(9) { width: 65px; }
.tabs > .tab:nth-child(10) { width: 51px; }
.tabs > .tab:nth-child(11) { width: 53px; }
.tabs > .tab:nth-child(12) { width: 90px; }
.tab.mute { color: #9a9a9a; }
.tab.an { width: 123px; }
.tab.de { width: 65px; }
.ctx-tabs { width: 188px; margin-left: 3px; flex: none; display: flex; background: #1d1d1d; }
.tell { width: 395px; flex: none; position: relative; background: #1b1b1b; display: flex; align-items: center; }
.bulb { position: relative; margin: -1px 0 0 15px; }
.tell-t { position: relative; margin-left: 13px; color: #9a9a9a; font-size: 11.500px; width: 267px; line-height: 28px; white-space: nowrap; }
.share { position: relative; margin-top: -4px; width: 72px; height: 23px; background: #454545; border: 1px solid #777; display: flex; align-items: center; padding-left: 4px; gap: 3px; }
.share b { font-size: 13px; font-weight: 600; color: #eee; }

/* ribbon */
.ribbon { height: 92px; flex: none; display: flex; position: relative; background: #333; padding-top: 4px; font-size: 11.500px; line-height: 16px; }
.grp { height: 84px; flex: none; border-right: 1px solid #555; display: flex; flex-direction: column; }
.g-clip { width: 106px; }
.g-font { width: 232px; }
.g-align { width: 219px; }
.g-num { width: 156px; }
.g-sty { width: 194px; }
.g-cells { width: 102px; }
.g-edit { width: 151px; }
.g-add { width: 63px; }
.g-wps { width: 100px; }
.body { height: 72px; flex: none; }
.lab { position: relative; height: 12px; line-height: 15px; text-align: center; color: #e6e6e6; }
.has-dl { padding-right: 15px; }
.dl { position: absolute; right: 3px; top: 3px; width: 8px; height: 8px; border-left: 1px solid #bbb; border-top: 1px solid #bbb; }
.dl::after { content: ""; position: absolute; left: 2px; top: 2px; width: 5px; height: 5px; border-right: 1px solid #bbb; border-bottom: 1px solid #bbb; }

.big { display: flex; flex-direction: column; align-items: center; flex: none; text-align: center; white-space: nowrap; }
.big > svg { height: 30px; margin: 4px 0 3px; }
.w72 { width: 72px; } .w62 { width: 62px; } .w42 { width: 42px; }
.w44 { width: 44px; } .w50 { width: 50px; } .w34 { width: 34px; }

.clipb { display: flex; }
.paste { margin-left: 10px; width: 42px; }
.paste > svg { height: 34px; margin: 0 0 3px; }
.paste .solo { margin-top: 1px; }
.stack3 { width: 22px; display: flex; flex-direction: column; align-items: center; padding-top: 3px; gap: 7px; }
.clip-c { margin: 27px 0 0 5px; }

.rows { display: flex; flex-direction: column; padding-top: 7px; }
.row { height: 23px; display: flex; align-items: center; }
.r2 { margin-top: 7px; height: 24px; }
.g-font .row { padding-left: 8px; }
.g-font .r2 { padding-left: 6px; }
.g-num .row { padding-left: 8px; }
.b { width: 24px; height: 23px; flex: none; display: flex; align-items: center; justify-content: center; position: relative; color: #ddd; }
.b.hl { background: #4d4d4d; }
.combo { height: 23px; display: flex; align-items: center; justify-content: space-between; border: 1px solid #5e5e5e; background: #3c3c3c; padding: 0 6px 0 3px; color: #d9d9d9; flex: none; }
.c-font { width: 123px; }
.c-size { width: 43px; margin-left: 2px; }
.c-num { width: 140px; }
.grow { font-size: 15px; margin-left: 1px; }
.shrink { font-size: 12px; }
.up, .dn { position: absolute; width: 0; height: 0; border: 3px solid transparent; right: 3px; top: 3px; }
.up { border-bottom: 3px solid #3e8ad6; border-top: 0; }
.dn { border-top: 3px solid #3e8ad6; border-bottom: 0; }
.fmt b { font: 700 12px/16px "Liberation Sans", sans-serif; color: #d8d8d8; }
.fmt .it { font-style: italic; font-family: "Liberation Serif", serif; }
.fmt .un { border-bottom: 1px solid #d8d8d8; line-height: 12px; }
.vs { width: 1px; height: 21px; background: #555; flex: none; }
.ml2 { margin-left: 2px; } .ml3 { margin-left: 3px; } .ml4 { margin-left: 4px; } .ml5 { margin-left: 5px; } .ml7 { margin-left: 7px; } .nm2 { margin-left: -2px; }
.bfill { margin-left: 3px; width: 23px; }
.bcol { margin-left: 4px; }
.acol { position: absolute; left: 0; right: 0; top: 0; text-align: center; font-size: 14px; line-height: 17px; color: #e8e8e8; }
.bcol svg { position: relative; }

.alignb { display: flex; padding-top: 0; }
.a-left { margin-left: 7px; width: 147px; }
.a-left .ori { margin-left: 1px; }
.a-left .rtl { margin-left: 2px; }
.tall { height: 55px; margin: 5px 0 0 7px; }
.a-right { margin-left: 2px; }
.wrapt { flex-direction: column; font-size: 10px; line-height: 10px; }
.wrapt b { font-weight: 400; }
.wrapt em { color: #3e8ad6; font-size: 8px; }
.sm .b { width: 24px; }
.sm .b:first-child { margin-left: 1px; width: 22px; margin-right: 2px; }

.tx-l { font-size: 16px; color: #ccc; }
.comma { font-weight: 700; align-items: flex-start; }
.dec { font: 9.500px/8px "Open Sans", sans-serif; text-align: right; color: #ddd; }
.dec span { margin-left: 4px; }
.ar { position: absolute; left: 2px; top: 3px; color: #3e8ad6; font-size: 11px; }
.a2 { top: 12px; left: 3px; }

.bigs { display: flex; }
.g-sty .bigs { padding-left: 8px; }
.g-add .bigs { padding-left: 0; }
.g-wps .bigs { padding-left: 4px; }
.cellrows { display: flex; flex-direction: column; }
.g-cells .cellrows { padding-bottom: 1px; margin-top: -1px; }
.g-cells .lab { margin-top: 1px; }
.crow { height: 23px; display: flex; align-items: center; flex: none; padding-left: 4px; white-space: nowrap; }
.crow span { margin-left: 8px; }
.crow.dis { color: #6e6e6e; }
.c-a { margin-left: 12px; }
.c-b { margin-left: 14px; }
.c-c { margin-left: -1px; }
.editb { display: flex; }
.edit-l { width: 53px; padding-left: 6px; }
.edit-l .crow { padding-left: 5px; }
.sigma { font: 700 21px/23px "Liberation Sans", sans-serif; margin-left: 0 !important; color: #ddd; width: 18px; }
.c-s { margin-left: 8px; }
.c-e { margin-left: 5px; }
.sortA { font: 700 14px "Liberation Sans", sans-serif; fill: #3e8ad6; }
.sortZ { font: 700 14px "Liberation Sans", sans-serif; fill: #8b5bb5; }
.pdf { font: 700 8px "Liberation Sans", sans-serif; fill: #fff; text-anchor: middle; }
.collapse { position: absolute; right: 11px; top: 83px; }

/* formula bar */
.fbar { height: 47px; flex: none; display: flex; padding-top: 11px; background: #262626; }
.namebox { width: 140px; height: 26px; margin-left: 7px; background: #333; padding: 0 6px 0 7px; display: flex; justify-content: space-between; align-items: center; font-size: 12px; }
.namebox .tri { border-width: 4px; border-top-width: 5px; }
.vdots { width: 32px; height: 26px; display: flex; flex-direction: column; align-items: center; justify-content: center; gap: 2px; }
.vdots i { width: 2.500px; height: 2.500px; background: #ddd; }
.fbtns { width: 109px; height: 26px; background: #333; display: flex; align-items: center; padding-left: 13px; gap: 26px; }
.fx { font: italic 700 13px/16px "Liberation Serif", serif; color: #ccc; margin-left: -1px; }
.fx sub { font-size: 9px; line-height: 0; }
.formula { width: 1072px; height: 26px; margin-left: 4px; background: #333; display: flex; justify-content: space-between; align-items: center; padding: 0 4px 0 12px; font-size: 12px; }

/* headers */
.colhead { height: 16px; flex: none; display: flex; background: #2a2a2a; }
.corner { width: 24px; height: 16px; display: flex; justify-content: flex-end; align-items: flex-end; padding: 0 4px 1px 0; flex: none; border-right: 1px solid #555; }
.cols {
  display: grid; flex: none; width: 1325px;
  grid-template-columns: 53px 51px 80px 93px 30px 45px 79px 73px 57px 64px 58px 79px 97px 74px 13px 12px 13px 66px 25px 24px 26px 25px 13px 25px 24px 26px 25px 25px 25px 25px;
}
.cols span { text-align: center; color: #d2d2d2; font-size: 11.500px; line-height: 15px; border-right: 1px solid #4c4c4c; overflow: hidden; }
.cols .sel { background: #636363; color: #eee; border-bottom: 2px solid #1f7a52; }
.sbtn { display: flex; align-items: center; justify-content: center; border: 1px solid #777; background: #3a3a3a; flex: none; }
.up-b { width: 15px; height: 15px; margin-left: 1px; }
.dn-b { width: 15px; height: 14px; margin-left: 1px; }

.main { height: 451px; flex: none; display: flex; background: #262626; }
.rowhead { width: 24px; flex: none; display: grid; grid-auto-rows: 16px; }
.rowhead span { text-align: center; color: #d2d2d2; font-size: 11.500px; line-height: 15px; border-bottom: 1px solid #4c4c4c; }
.rowhead .sel { background: #636363; color: #eee; border-right: 2px solid #1f7a52; }

.sheet {
  position: relative; width: 1325px; height: 451px; flex: none; background: #fff; color: #1a1a1a;
  display: grid;
  grid-template-columns: 53px 51px 80px 93px 30px 45px 79px 73px 57px 64px 58px 79px 97px 74px 13px 12px 13px 66px 25px 24px 26px 25px 13px 25px 24px 26px 25px 25px 25px 25px;
  grid-template-rows: repeat(28, 16px);
  font: 11.500px/16px Lato, "Open Sans", sans-serif;
  letter-spacing: .35px;
}
.banner { grid-column: 3 / 5; grid-row: 4 / 6; background: #ff0; display: flex; align-items: center; padding-left: 4px; }
.pivot { display: grid; grid-auto-rows: 16px; }
.pivot > div { padding: 0 3px; white-space: nowrap; position: relative; }
.p1 { grid-column: 3 / 5; grid-row: 6 / 18; grid-template-columns: 80px 93px; }
.p2 { grid-column: 7 / 9; grid-row: 5 / 12; grid-template-columns: 79px 73px; }
.p2 > div:nth-child(odd) { padding-left: 2px; }
.p3 { grid-column: 12 / 14; grid-row: 3 / 10; grid-template-columns: 79px 97px; }
.pivot .n { text-align: right; }
.pivot .ph { background: #d9e1f2; border-bottom: 1px solid #8ea9db; font-weight: 700; letter-spacing: 0; line-height: 15px; }
.pivot .ph.tight { padding-left: 2px; letter-spacing: -.38px; }
.p3 .ph.tight { padding-left: 3px; }
.pivot .ph.tight2 { letter-spacing: -.55px; padding-left: 0; padding-right: 4px; }
.pivot .pt { background: #d9e1f2; border-top: 1px solid #8ea9db; font-weight: 700; letter-spacing: 0; line-height: 14px; }
.fbtn { position: absolute; right: 0; top: 0; width: 15px; height: 15px; background: #f4f6fa; border: 1px solid #b5bfd0; display: flex; align-items: center; justify-content: center; }
.active { outline: 2px solid #1f6b48; outline-offset: -2px; }
.active::after { content: ""; position: absolute; right: -3px; bottom: -3px; width: 6px; height: 6px; background: #1f6b48; border: 1px solid #fff; }

.slicer { position: absolute; left: 522px; top: 16px; width: 158px; height: 151px; background: #fff; border: 1px solid #4f74a8; padding: 0 6px; font-family: "Open Sans", sans-serif; letter-spacing: 0; }
.sl-head { height: 22px; display: flex; align-items: center; padding-bottom: 2px; border-bottom: 1px solid #4f74a8; margin-bottom: 3px; font: 700 11px/16px Lato, sans-serif; color: #111; }
.sl-i1 { margin-left: auto; }
.sl-i2 { margin-left: 11px; margin-right: 2px; }
.sl-i { height: 20px; margin-bottom: 3px; background: #b4c6e7; border: 1px solid #8a8f98; border-radius: 4px; padding-left: 6px; line-height: 18px; font-size: 11px; color: #222; }

.chart { position: absolute; margin: 0; background: #fff; outline: 1px solid #d9d9d9; outline-offset: -1px; }
.chart.bar { left: 286px; top: 181px; width: 394px; height: 238px; }
.chart.pie { left: 684px; top: 153px; width: 335px; height: 238px; }
.chart svg text { font-family: "Open Sans", sans-serif; letter-spacing: 0; }
.chart .t-s { font-size: 8px; fill: #404040; }
.chart .t-title { font-size: 20px; font-weight: 300; fill: #595959; text-anchor: middle; }
.chart .t-pie { font-size: 17px; font-weight: 700; fill: #595959; text-anchor: middle; }
.chart .ya text { font-size: 8.500px; fill: #595959; text-anchor: end; }
.chart .xa text { font-size: 8.500px; fill: #595959; text-anchor: middle; }
.chart .cl text { font-size: 8.500px; fill: #404040; text-anchor: middle; }
.chart .lg { font-size: 8.500px; fill: #595959; }
.chart .pl text { font-size: 8.500px; font-weight: 700; fill: #fff; text-anchor: middle; }
.chart .lgp text { font-size: 8.500px; fill: #595959; }

.vscroll { width: 17px; flex: none; display: flex; flex-direction: column; }
.vthumb { height: 419px; flex: none; background: #383838; border: 1px solid #666; margin-left: 1px; width: 15px; }
.vblack { height: 18px; flex: none; background: #0d0d0d; margin-left: 1px; width: 15px; }

/* sheet tabs */
.sheetbar { height: 28px; flex: none; display: flex; align-items: flex-start; background: #262626; border-top: 1px solid #8a8a8a; font-size: 12px; }
.nav { margin-top: 9px; }
.n1 { margin-left: 29px; }
.n2 { margin-left: 21px; }
.stab { width: 65px; height: 24px; margin-left: 0; text-align: center; line-height: 23px; color: #e6e6e6; flex: none; border-right: 1px solid #777; }
.stab.on { margin-left: 40px; background: #fff; color: #217346; font-weight: 700; border-right: 0; border-bottom: 2px solid #217346; }
.plus { margin: 4px 0 0 32px; }
.vdots.sb { margin: 5px 0 0 536px; width: 8px; height: 12px; }
.hscroll { margin: 6px 0 0 11px; display: flex; height: 15px; width: 509px; }
.sbtn.h { width: 14px; height: 15px; }
.htrack { width: 462px; height: 15px; background: #383838; border: 1px solid #666; border-left: 0; border-right: 0; }
.hblack { width: 19px; height: 15px; background: #0d0d0d; }

/* status bar */
.status { height: 23px; flex: none; display: flex; align-items: center; background: #262626; border-top: 1px solid #555; border-bottom: 1px solid #555; font-size: 11.500px; }
.ready { margin-left: 13px; width: 50px; }
.acc { margin-right: 2px; }
.acc-t { font-size: 10.500px; width: 992px; color: #e8e8e8; font-weight: 700; }
.views { display: flex; height: 21px; }
.view { width: 39px; height: 21px; margin-right: 2px; display: flex; align-items: center; justify-content: center; }
.view.on { background: #4e4e4e; }
.zoomer { display: flex; align-items: center; margin-left: 3px; }
.pm { width: 9px; height: 9px; position: relative; }
.pm::before { content: ""; position: absolute; left: 0; top: 4px; width: 9px; height: 1px; background: #ddd; }
.plusz::after { content: ""; position: absolute; left: 4px; top: 0; width: 1px; height: 9px; background: #ddd; }
.slider { position: relative; width: 100px; height: 1px; background: #e8e8e8; margin: 0 4px 0 5px; }
.knob { position: absolute; left: 37px; top: -5px; width: 5px; height: 11px; background: #fff; }
.tick { position: absolute; left: 51px; top: -3px; width: 1px; height: 7px; background: #e8e8e8; }
.pct { margin-left: 13px; color: #ddd; }

/* taskbar */
.taskbar { height: 47px; flex: none; display: grid; grid-template-columns: 1fr auto 1fr; background: #1c1c1c; border-bottom: 2px solid #050505; }
.tb-left { position: relative; padding: 10px 0 0 21px; }
.badge { position: absolute; left: 34px; top: 6px; width: 16px; height: 16px; border-radius: 50%; background: #f18e9b; color: #222; font-size: 11px; line-height: 16px; text-align: center; }
.tb-mid { display: flex; }
.ti { position: relative; width: 32px; height: 45px; display: flex; align-items: center; justify-content: center; }
.on-dot::after { content: ""; position: absolute; left: 14px; bottom: 4px; width: 4px; height: 4px; border-radius: 50%; background: #8a8a8a; }
.on-bar::after { content: ""; position: absolute; left: 11px; bottom: 3px; width: 10px; height: 3px; border-radius: 2px; background: #5aa9e6; }
.tdot { position: absolute; right: 3px; top: 10px; width: 5px; height: 5px; border-radius: 50%; background: #4fb3e8; }
.ti .tk { font: 700 8px "Liberation Sans", sans-serif; fill: #fff; text-anchor: middle; }
.tb-right { display: flex; align-items: center; }
.t-chev { margin-left: 121px; }
.eng { margin-left: 22px; font-size: 12px; width: 41px; color: #e6e6e6; }
.t-wifi { margin-left: 0; }
.t-vol { margin-left: 7px; }
.t-bat { margin-left: 9px; }
.clock { margin-left: 17px; width: 48px; display: flex; flex-direction: column; align-items: flex-end; line-height: 17px; font-size: 12px; color: #eee; white-space: nowrap; }

/* watermark */
.wm-ar { position: absolute; left: 590px; top: 677px; width: 190px; text-align: center; font: 700 55px/60px "DejaVu Sans", sans-serif; color: rgba(215,215,215,.85); }
.wm-en { position: absolute; left: 600px; top: 729px; width: 170px; text-align: center; font: 400 28.500px/48px "Open Sans", sans-serif; color: rgba(215,215,215,.85); white-space: nowrap; letter-spacing: -.4px; }
```
